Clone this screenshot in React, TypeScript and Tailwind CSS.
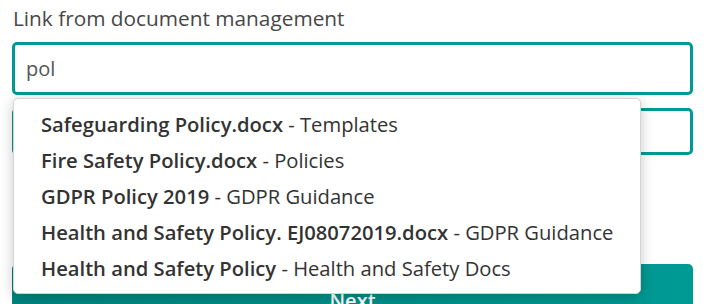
import React from "react";

const items: [string, string][] = [
  ["Safeguarding Policy.docx", "Templates"],
  ["Fire Safety Policy.docx", "Policies"],
  ["GDPR Policy 2019", "GDPR Guidance"],
  ["Health and Safety Policy. EJ08072019.docx", "GDPR Guidance"],
  ["Health and Safety Policy", "Health and Safety Docs"],
];

export default function App() {
  return (
    <div
      className="relative w-[709px] h-[304px] overflow-hidden bg-white"
      style={{ fontFamily: '"Open Sans", sans-serif' }}
    >
      <div className="pl-[12px] w-[693px] flex flex-col">
        <label className="mt-[4px] ml-[1px] text-[20.8px] leading-[28px] text-[#474747]">
          Link from document management
        </label>
        <div className="mt-[10px] h-[53px] rounded-[5px] border-[3px] border-[#009a94] flex items-center pl-[11px] text-[20px] text-[#555]">
          pol
        </div>
        <div className="mt-[13px] h-[47px] rounded-[5px] border-[3px] border-[#009a94]" />
        <div className="mt-[109px] h-[50px] rounded-t-[5px] bg-gradient-to-r from-[#00857f] to-[#009a94] flex justify-center pt-[22px] text-white text-[20px] font-semibold">
          Next
        </div>
      </div>
      <div className="absolute left-[13px] top-[98px] w-[628px] h-[196px] bg-white rounded-[5px] border border-[#d4d4d4] shadow-[0_3px_14px_rgba(0,0,0,0.22)] py-[7px]">
        {items.map(([b, r]) => (
          <div
            key={b}
            className="h-[36px] flex items-center pl-[27px] text-[20.2px] text-[#333] whitespace-nowrap"
          >
            <span className="font-semibold">{b}</span>
            <span>&nbsp;- {r}</span>
          </div>
        ))}
      </div>
    </div>
  );
}
